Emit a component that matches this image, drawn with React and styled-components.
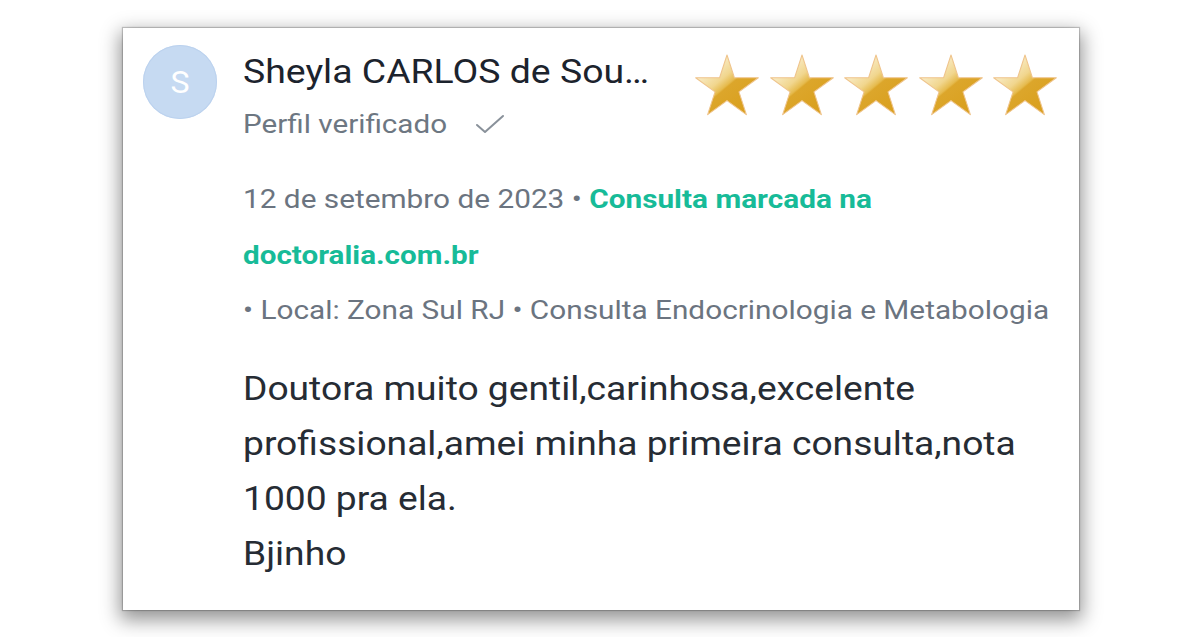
import React from 'react';
import styled, { createGlobalStyle } from 'styled-components';

const GlobalStyle = createGlobalStyle`
  html, body {
    margin: 0;
    padding: 0;
    background: #ffffff;
  }
  body {
    font-family: Roboto, "Noto Sans", Arial, sans-serif;
  }
`;

const Page = styled.div`
  width: 1198px;
  height: 637px;
  padding: 28px 0 0 123px;
  box-sizing: border-box;
  overflow: hidden;
`;

const Card = styled.div`
  width: 956px;
  height: 582px;
  box-sizing: border-box;
  background: #ffffff;
  box-shadow: 0 7px 18px 3px rgba(0, 0, 0, 0.42), 0 0 1px 1px rgba(0, 0, 0, 0.2);
  padding: 17px 21px 0 20px;
  display: flex;
  gap: 26px;
`;

const Avatar = styled.div`
  flex: 0 0 74px;
  width: 74px;
  height: 74px;
  border-radius: 50%;
  background: #c6daf2;
  box-shadow: inset 0 0 0 1px #bcd2ee;
  color: #ffffff;
  font-size: 32px;
  display: flex;
  align-items: center;
  justify-content: center;
`;

const Content = styled.div`
  flex: 1;
  display: flex;
  flex-direction: column;
`;

const Header = styled.div`
  display: flex;
  justify-content: space-between;
  align-items: flex-start;
`;

const Who = styled.div`
  display: flex;
  flex-direction: column;
  padding-top: 6px;
`;

// the screenshot's text is a little stretched sideways
const Wide = styled.span`
  display: inline-block;
  white-space: nowrap;
  transform: scaleX(${(p) => p.$x || 1.13});
  transform-origin: left center;
`;

const Name = styled.div`
  font-size: 34px;
  line-height: 40px;
  color: #1c232d;
  white-space: nowrap;
`;

const Verified = styled.div`
  margin-top: 15px;
  font-size: 26px;
  line-height: 36px;
  color: #6d7782;
  display: flex;
  align-items: center;
`;

const CheckBox = styled.span`
  display: inline-flex;
  margin-left: 53px;
`;

const Stars = styled.div`
  display: flex;
  gap: 8.5px;
  padding-top: 10px;
`;

const Meta = styled.div`
  margin-top: 30px;
  font-size: 26px;
  line-height: 55.5px;
  color: #6b7480;
`;

const Link = styled.span`
  color: #17bb98;
  font-weight: 700;
`;

const Body = styled.div`
  margin-top: 22px;
  font-size: 33px;
  line-height: 55px;
  color: #262c34;
`;

const Line = styled.div``;

function Star() {
  return (
    <svg width="66" height="60" viewBox="0 0 100 91" style={{ overflow: 'visible' }}>
      <defs>
        <linearGradient id="gold" x1="0.15" y1="0.1" x2="0.85" y2="0.9">
          <stop offset="0" stopColor="#fdf7e3" />
          <stop offset="0.38" stopColor="#f1d68e" />
          <stop offset="0.5" stopColor="#e6bb4e" />
          <stop offset="0.53" stopColor="#dca62b" />
          <stop offset="1" stopColor="#d99f1d" />
        </linearGradient>
      </defs>
      <polygon
        points="50,0 61.23,34.55 97.55,34.55 68.16,55.9 79.39,90.45 50,69.1 20.61,90.45 31.84,55.9 2.45,34.55 38.77,34.55"
        fill="url(#gold)"
        stroke="#efc48c"
        strokeWidth="1.6"
        strokeLinejoin="round"
      />
    </svg>
  );
}

function Check() {
  return (
    <svg width="30" height="22" viewBox="0 0 30 22">
      <polyline points="2,12 10,19 28,3" fill="none" stroke="#89919a" strokeWidth="2" strokeLinecap="round" strokeLinejoin="round" />
    </svg>
  );
}

export default function App() {
  return (
    <>
      <GlobalStyle />
      <Page>
        <Card>
          <Avatar>S</Avatar>
          <Content>
            <Header>
              <Who>
                <Name>
                  <Wide $x={1.1}>Sheyla CARLOS de Sou…</Wide>
                </Name>
                <Verified>
                  <Wide $x={1.14}>Perfil verificado</Wide>
                  <CheckBox>
                    <Check />
                  </CheckBox>
                </Verified>
              </Who>
              <Stars>
                {[0, 1, 2, 3, 4].map((i) => (
                  <Star key={i} />
                ))}
              </Stars>
            </Header>
            <Meta>
              <Line>
                <Wide $x={1.145}>
                  12 de setembro de 2023 • <Link>Consulta marcada na</Link>
                </Wide>
              </Line>
              <Line>
                <Wide $x={1.14}>
                  <Link>doctoralia.com.br</Link>
                </Wide>
              </Line>
              <Line>
                <Wide $x={1.145}>• Local: Zona Sul RJ • Consulta Endocrinologia e Metabologia</Wide>
              </Line>
            </Meta>
            <Body>
              <Line>
                <Wide $x={1.127}>Doutora muito gentil,carinhosa,excelente</Wide>
              </Line>
              <Line>
                <Wide $x={1.127}>profissional,amei minha primeira consulta,nota</Wide>
              </Line>
              <Line>
                <Wide $x={1.127}>1000 pra ela.</Wide>
              </Line>
              <Line>
                <Wide $x={1.127}>Bjinho</Wide>
              </Line>
            </Body>
          </Content>
        </Card>
      </Page>
    </>
  );
}
